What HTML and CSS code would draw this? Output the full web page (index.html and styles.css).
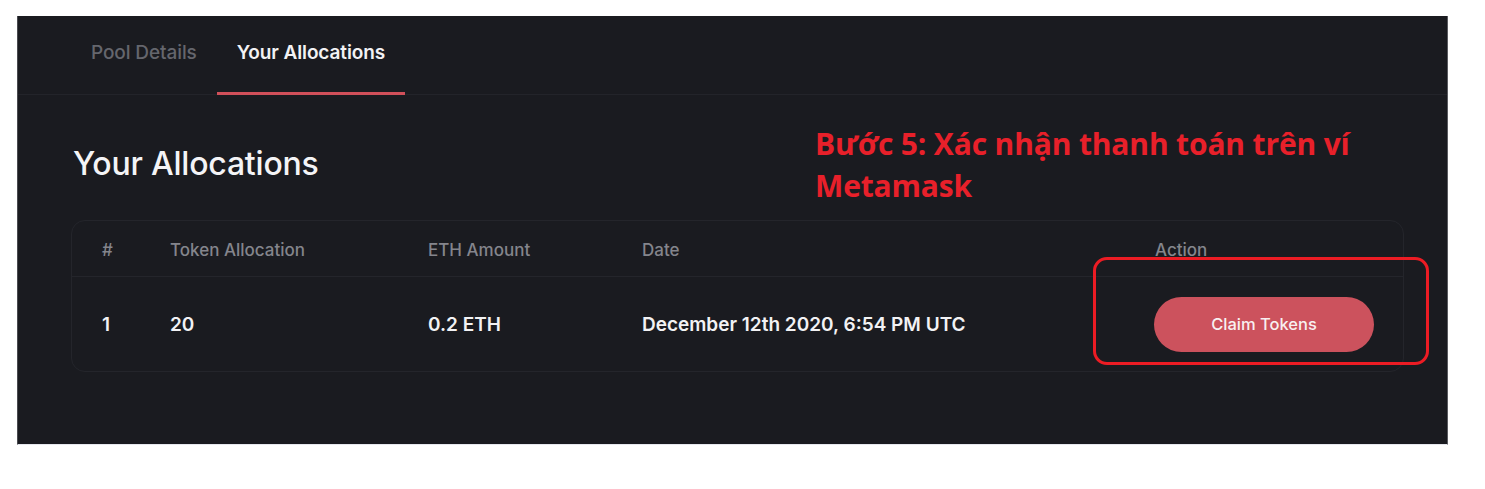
FILE: index.html
```html
<!DOCTYPE html>
<html lang="vi">
<head>
<meta charset="utf-8">
<title>Your Allocations</title>
<link rel="stylesheet" href="styles.css">
</head>
<body>
<div class="panel">
  <nav class="tabs">
    <div class="tab">Pool Details</div>
    <div class="tab active">Your Allocations</div>
  </nav>
  <section class="content">
    <h1 class="title">Your Allocations</h1>
    <div class="card">
      <div class="row head">
        <div class="c-num">#</div>
        <div class="c-tok">Token Allocation</div>
        <div class="c-eth">ETH Amount</div>
        <div class="c-date">Date</div>
        <div class="c-act">Action</div>
      </div>
      <div class="row body">
        <div class="c-num">1</div>
        <div class="c-tok">20</div>
        <div class="c-eth">0.2 ETH</div>
        <div class="c-date">December 12th 2020, 6:54 PM UTC</div>
        <div class="c-act"><button class="claim">Claim Tokens</button></div>
      </div>
    </div>
  </section>
  <div class="note">Bước 5: Xác nhận thanh toán trên ví<br>Metamask</div>
  <div class="highlight"></div>
</div>
</body>
</html>
```
FILE: styles.css
```css
* { box-sizing: border-box; }
html, body { margin: 0; padding: 0; background: #ffffff; }
body { font-family: Inter, "Noto Sans", sans-serif; }

.panel {
  position: relative;
  margin: 16px 0 0 17px;
  width: 1431px;
  height: 429px;
  background: #1a1b20;
  border-left: 1px solid #4a4b50;
  border-right: 1px solid #5a5b60;
  border-bottom: 1px solid #e6e8ee;
}

.tabs {
  display: flex;
  height: 79px;
  padding-left: 53px;
  border-bottom: 1px solid #23242a;
}
.tab {
  padding: 0 20px 6px;
  display: flex;
  align-items: center;
  height: 79px;
  font-size: 19px;
  font-weight: 500;
  color: #65666d;
  letter-spacing: -0.1px;
}
.tab.active {
  color: #f2f2f4;
  font-weight: 600;
  border-bottom: 3px solid #d1505a;
  padding-bottom: 3px;
}

.content { padding: 0 43px 0 53px; }
.title {
  margin: 51px 0 0 2px;
  font-size: 32px;
  font-weight: 500;
  color: #f4f4f6;
  line-height: 36px;
  letter-spacing: -0.2px;
}

.card {
  margin-top: 38px;
  width: 1333px;
  border: 1px solid #24252b;
  border-radius: 14px;
}
.row {
  display: grid;
  grid-template-columns: 69px 258px 214px 513px 1fr;
  align-items: center;
  padding-left: 29px;
}
.row.head {
  height: 56px;
  border-bottom: 1px solid #24252b;
  font-size: 17px;
  color: #84858c;
  font-weight: 500;
  padding-top: 2px;
}
.row.body {
  height: 94px;
  font-size: 19px;
  font-weight: 600;
  color: #f2f2f4;
}
.c-num { padding-left: 1px; }
.claim {
  border: 0;
  width: 220px;
  height: 55px;
  border-radius: 28px;
  background: #cc525d;
  color: #f8f0f1;
  font-family: Inter, "Noto Sans", sans-serif;
  font-size: 16.5px;
  font-weight: 500;
  margin-left: -1px;
}

.note {
  position: absolute;
  left: 797px;
  top: 107px;
  font-family: "Open Sans", "Noto Sans", sans-serif;
  font-weight: 700;
  font-size: 30px;
  line-height: 42px;
  color: #e8202a;
  letter-spacing: -0.15px;
}
.highlight {
  position: absolute;
  left: 1075px;
  top: 241px;
  width: 336px;
  height: 108px;
  border: 3px solid #ec1c24;
  border-radius: 14px;
}
```
